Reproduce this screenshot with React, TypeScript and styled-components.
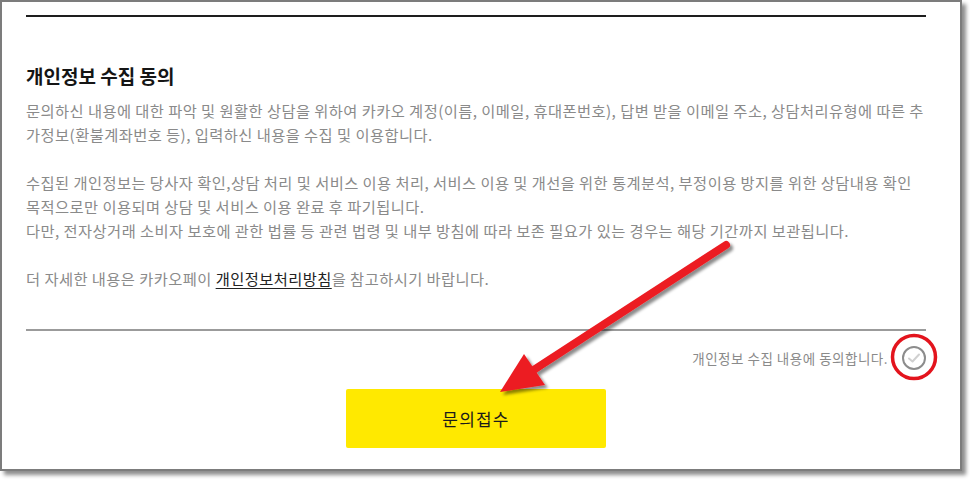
import React from "react";
import styled, { createGlobalStyle } from "styled-components";

const Global = createGlobalStyle`
  html, body { margin: 0; padding: 0; background: #ffffff; }
  body { font-family: "Noto Sans CJK KR", "Noto Sans", sans-serif; }
  * { box-sizing: border-box; }
`;

const Page = styled.div`
  position: relative;
  width: 970px;
  height: 480px;
  overflow: hidden;
`;

const Frame = styled.div`
  width: 962px;
  height: 471px;
  border: 2px solid #7c7c7c;
  box-shadow: 4px 4px 4px rgba(0, 0, 0, 0.45);
  background: #ffffff;
  padding: 13px 34px 0 24px;
  display: flex;
  flex-direction: column;
`;

const Rule = styled.div<{ $thick?: boolean }>`
  height: 2px;
  background: ${(p) => (p.$thick ? "#1e1e1e" : "#9b9b9b")};
`;

const Title = styled.h2`
  margin: 46px 0 0;
  font-size: 19px;
  line-height: 26px;
  letter-spacing: 0;
  font-weight: 700;
  color: #151515;
`;

const Body = styled.p`
  margin: 9px 0 0;
  font-size: 15.3px;
  line-height: 24px;
  letter-spacing: 0.44px;
  color: #8a8a8a;
  white-space: nowrap;
`;

const Link = styled.a`
  color: #222222;
  text-decoration: underline;
  text-underline-offset: 3px;
`;

const Spacer = styled.div`
  height: 39px;
`;

const AgreeRow = styled.div`
  margin-top: 15px;
  display: flex;
  justify-content: flex-end;
  align-items: center;
  gap: 14px;
  height: 24px;
`;

const AgreeText = styled.span`
  font-size: 13.5px;
  letter-spacing: 0.5px;
  color: #8a8a8a;
`;

const Check = styled.span`
  width: 24px;
  height: 24px;
  border: 2px solid #8c8c8c;
  border-radius: 50%;
  display: flex;
  align-items: center;
  justify-content: center;
`;

const Submit = styled.button`
  margin: 19px auto 0;
  width: 260px;
  height: 59px;
  border: none;
  border-radius: 2px;
  background: #ffe900;
  color: #1b1b1b;
  font-family: "Noto Sans CJK KR", "Noto Sans", sans-serif;
  font-size: 17px;
  letter-spacing: 1.2px;
`;

const Overlay = styled.svg`
  position: absolute;
  left: 0;
  top: 0;
  pointer-events: none;
`;

export default function App() {
  return (
    <>
      <Global />
      <Page>
        <Frame>
          <Rule $thick />
          <Title>개인정보 수집 동의</Title>
          <Body>
            문의하신 내용에 대한 파악 및 원활한 상담을 위하여 카카오 계정(이름, 이메일, 휴대폰번호), 답변 받을 이메일 주소, 상담처리유형에 따른 추
            <br />
            가정보(환불계좌번호 등), 입력하신 내용을 수집 및 이용합니다.
            <br />
            <br />
            수집된 개인정보는 당사자 확인,상담 처리 및 서비스 이용 처리, 서비스 이용 및 개선을 위한 통계분석, 부정이용 방지를 위한 상담내용 확인
            <br />
            목적으로만 이용되며 상담 및 서비스 이용 완료 후 파기됩니다.
            <br />
            다만, 전자상거래 소비자 보호에 관한 법률 등 관련 법령 및 내부 방침에 따라 보존 필요가 있는 경우는 해당 기간까지 보관됩니다.
            <br />
            <br />
            더 자세한 내용은 카카오페이 <Link href="#">개인정보처리방침</Link>을 참고하시기 바랍니다.
          </Body>
          <Spacer />
          <Rule />
          <AgreeRow>
            <AgreeText>개인정보 수집 내용에 동의합니다.</AgreeText>
            <Check>
              <svg width="14" height="12" viewBox="0 0 14 12">
                <path d="M2 6.5 L5.5 9.5 L12 2.5" fill="none" stroke="#d0d0d0" strokeWidth="2" strokeLinecap="round" strokeLinejoin="round" />
              </svg>
            </Check>
          </AgreeRow>
          <Submit>문의접수</Submit>
        </Frame>
        <Overlay width="970" height="480" viewBox="0 0 970 480">
          <defs>
            <filter id="sh" x="-20%" y="-20%" width="140%" height="140%">
              <feDropShadow dx="3" dy="3" stdDeviation="1.5" floodColor="#000" floodOpacity="0.45" />
            </filter>
          </defs>
          <g filter="url(#sh)">
            <line x1="726" y1="245" x2="532" y2="371" stroke="#ec1c24" strokeWidth="8" strokeLinecap="round" />
            <polygon points="500,392 524,354 545,385" fill="#ec1c24" />
          </g>
          <ellipse cx="914" cy="357" rx="21.5" ry="21.5" fill="none" stroke="#e3141d" strokeWidth="3.5" />
        </Overlay>
      </Page>
    </>
  );
}
